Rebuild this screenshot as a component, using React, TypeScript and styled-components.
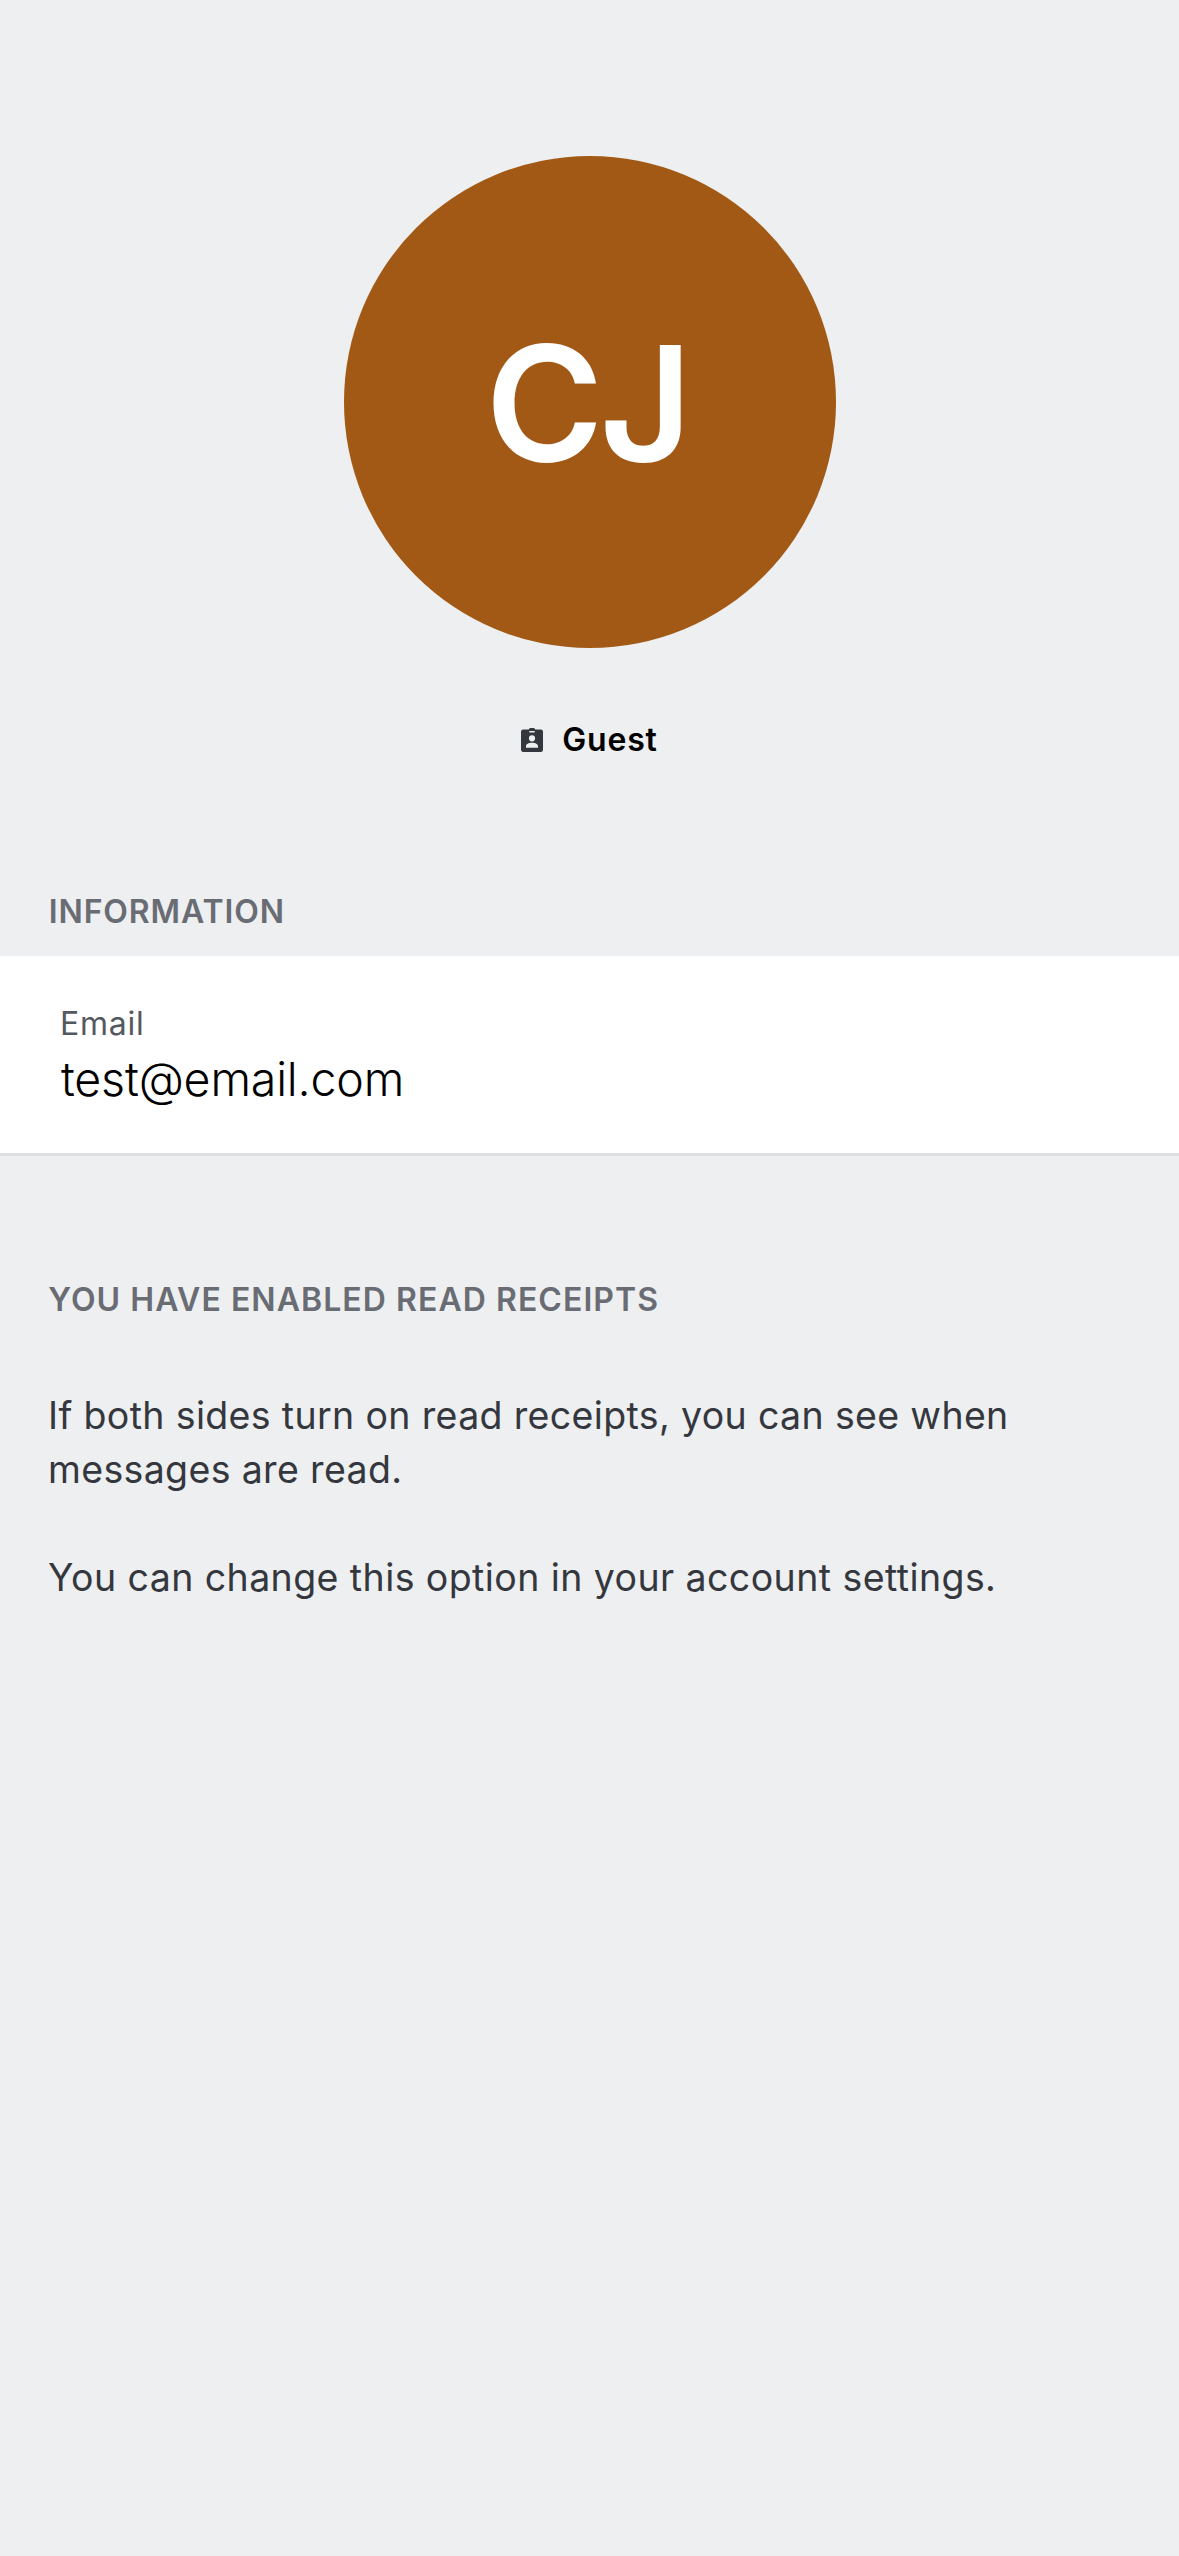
import React from 'react';
import styled, { createGlobalStyle } from 'styled-components';

const GlobalStyle = createGlobalStyle`
  *, *::before, *::after { box-sizing: border-box; }
  html, body { margin: 0; padding: 0; background: #edeff0; }
  h2, p { margin: 0; }
`;

const Screen = styled.main`
  display: flex;
  flex-direction: column;
  width: 100%;
  min-height: 2556px;
  padding-top: 156px;
  background: #edeff0;
  color: #34373d;
  font-family: Inter, "Liberation Sans", sans-serif;
  -webkit-font-smoothing: antialiased;
`;

const Profile = styled.header`
  display: flex;
  flex-direction: column;
  align-items: center;
  gap: 72px;
`;

const Avatar = styled.div`
  display: flex;
  align-items: center;
  justify-content: center;
  width: 492px;
  height: 492px;
  padding: 2px 5px 0 0;
  border-radius: 50%;
  background: #a25915;
  color: #fff;
  font-size: 160px;
  font-weight: 600;
  line-height: 200px;
  letter-spacing: -3.8px;
`;

const Role = styled.div`
  display: flex;
  align-items: center;
  gap: 19px;
  height: 39px;
  color: #000;
  font-size: 32px;
  font-weight: 600;
  line-height: 39px;
  letter-spacing: 0.8px;
`;

const BadgeIcon = styled.svg`
  display: block;
  width: 22px;
  height: 24px;
  margin-top: 1px;
`;

const Section = styled.section<{ $gap: string; $top: string }>`
  display: flex;
  flex-direction: column;
  gap: ${({ $gap }) => $gap};
  margin-top: ${({ $top }) => $top};
`;

const SectionTitle = styled.h2<{ $inset: string; $tracking: string }>`
  padding-left: ${({ $inset }) => $inset};
  color: #696c73;
  font-size: 32px;
  font-weight: 600;
  line-height: 39px;
  letter-spacing: ${({ $tracking }) => $tracking};
  text-transform: uppercase;
`;

const Card = styled.div`
  display: flex;
  flex-direction: column;
  gap: 6px;
  height: 200px;
  padding: 48px 60px 0;
  border-bottom: 3px solid #dce0e3;
  background: #fff;
`;

const Label = styled.p`
  color: #54585f;
  font-size: 32px;
  line-height: 39px;
  letter-spacing: 0.75px;
`;

const Value = styled.p`
  padding-left: 1px;
  color: #000;
  font-size: 46.5px;
  font-weight: 300;
  line-height: 60px;
  letter-spacing: -0.17px;
`;

const Notice = styled.div`
  display: flex;
  flex-direction: column;
  gap: 54px;
`;

const Paragraph = styled.p<{ $tracking: string }>`
  padding: 0 48px;
  font-size: 37.5px;
  line-height: 54px;
  letter-spacing: ${({ $tracking }) => $tracking};
`;

function GuestBadge() {
  return (
    <BadgeIcon viewBox="0 0 22 24" aria-hidden="true">
      <path
        fill="#34373d"
        fillRule="evenodd"
        d="M2.2 1.4H7.8C8.2.5 9 0 10 0H12C13 0 13.8.5 14.2 1.4H19.8A2.2 2.2 0 0 1 22 3.6V21.8A2.2 2.2 0 0 1 19.8 24H2.2A2.2 2.2 0 0 1 0 21.8V3.6A2.2 2.2 0 0 1 2.2 1.4ZM8.9 3A.8.8 0 0 0 8.9 4.6H13.1A.8.8 0 0 0 13.1 3ZM11 7.2A3.1 3.1 0 1 0 11 13.4A3.1 3.1 0 1 0 11 7.2ZM5 19.8H17V18.4C17 16 14.6 14.7 11 14.7S5 16 5 18.4Z"
      />
    </BadgeIcon>
  );
}

export default function App() {
  return (
    <>
      <GlobalStyle />
      <Screen>
        <Profile>
          <Avatar>CJ</Avatar>
          <Role>
            <GuestBadge />
            <span>Guest</span>
          </Role>
        </Profile>
        <Section $top="133px" $gap="25px">
          <SectionTitle $inset="48.7px" $tracking="0.9px">Information</SectionTitle>
          <Card>
            <Label>Email</Label>
            <Value>test@email.com</Value>
          </Card>
        </Section>
        <Section $top="124px" $gap="70px">
          <SectionTitle $inset="48.3px" $tracking="1.05px">You have enabled read receipts</SectionTitle>
          <Notice>
            <Paragraph $tracking="0.35px">
              If both sides turn on read receipts, you can see when
              <br />
              messages are read.
            </Paragraph>
            <Paragraph $tracking="0.42px">You can change this option in your account settings.</Paragraph>
          </Notice>
        </Section>
      </Screen>
    </>
  );
}
